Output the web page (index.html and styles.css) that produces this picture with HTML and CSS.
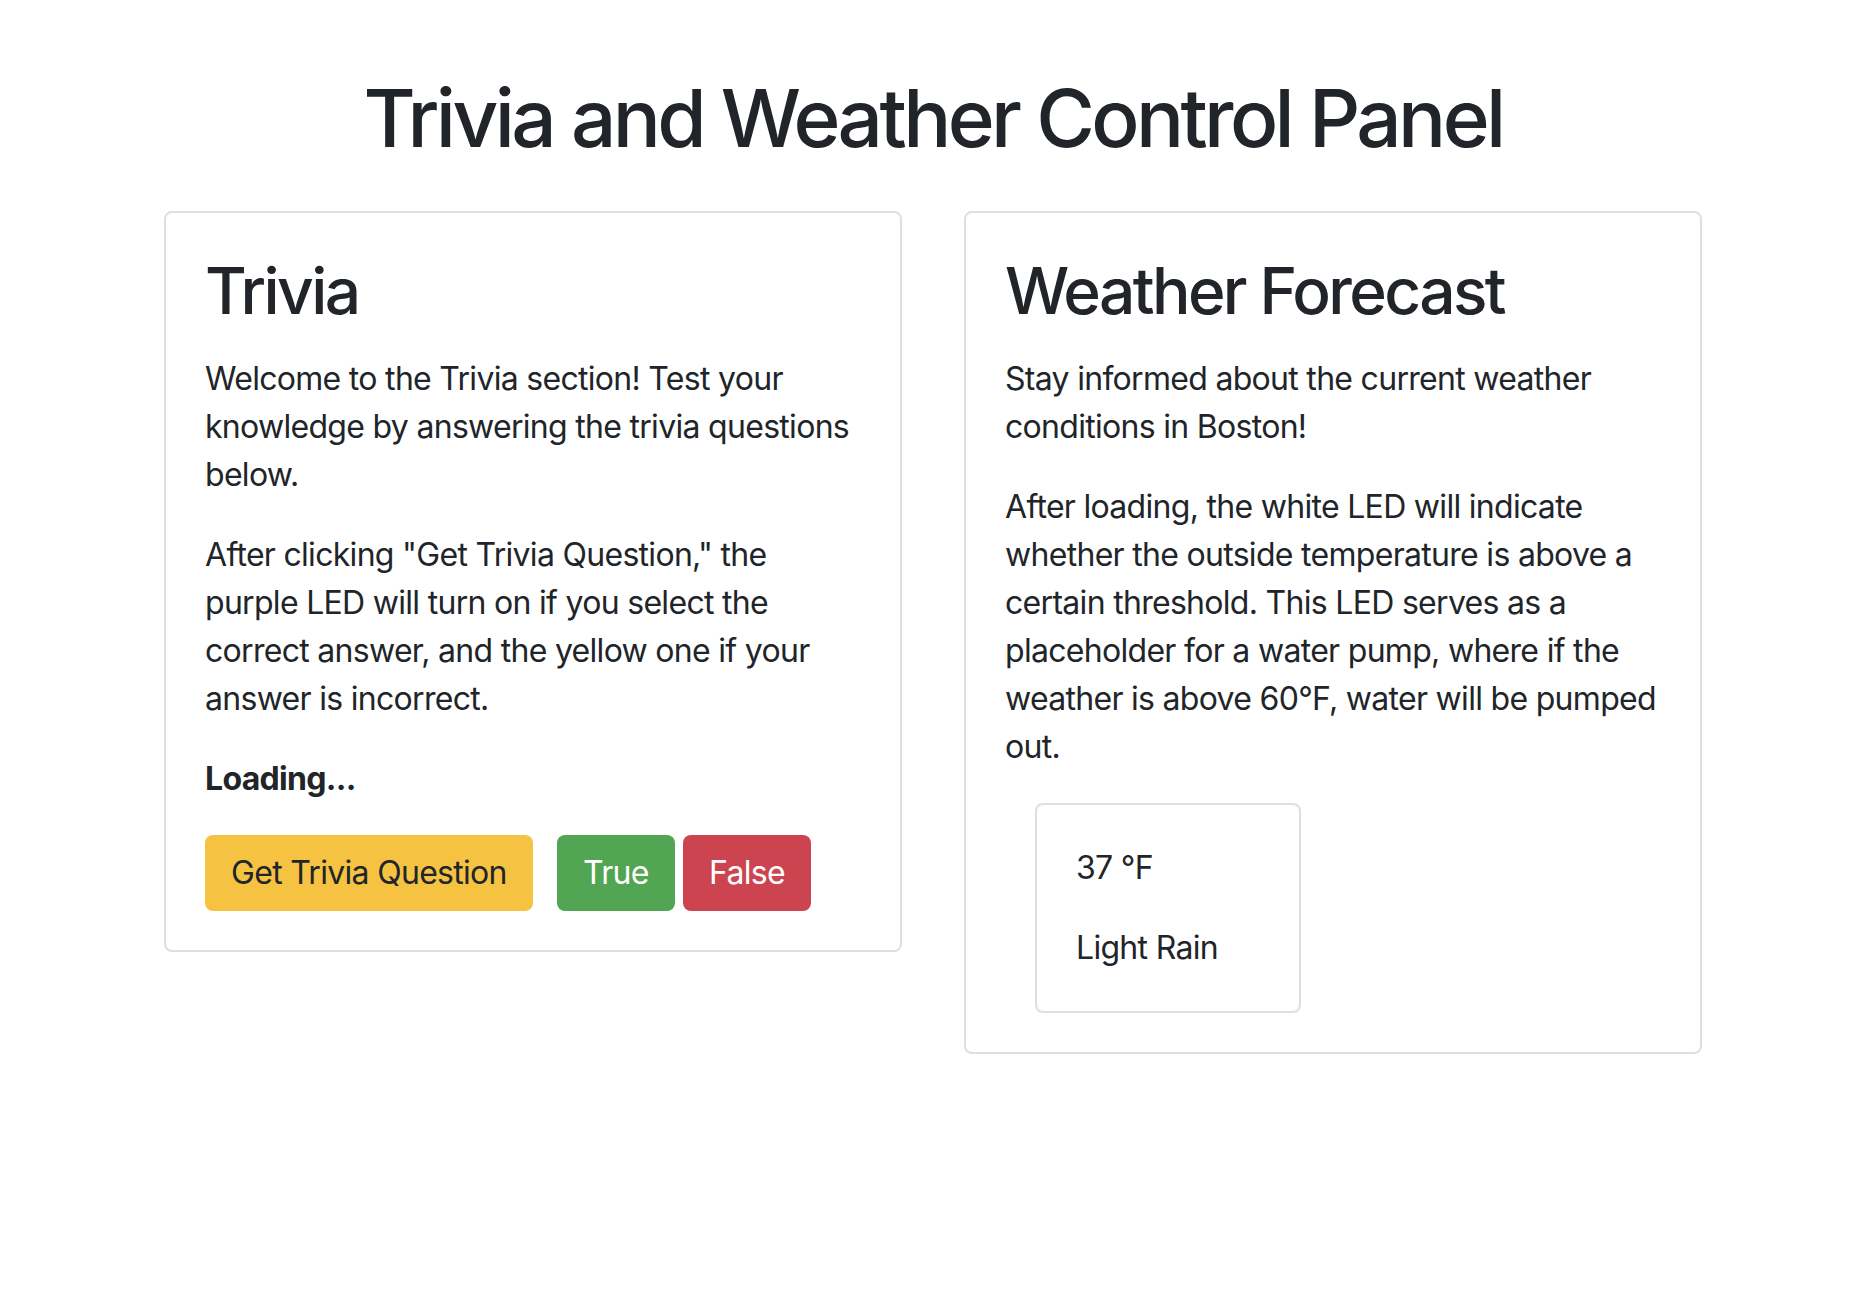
FILE: index.html
```html
<!DOCTYPE html>
<html lang="en">
<head>
<meta charset="utf-8">
<title>Trivia and Weather Control Panel</title>
<link rel="stylesheet" href="styles.css">
</head>
<body>
<div class="page">
  <h1 class="title">Trivia and Weather Control Panel</h1>
  <div class="columns">
    <section class="card">
      <div class="card-body">
        <h2 class="card-title">Trivia</h2>
        <p>Welcome to the Trivia section! Test your knowledge by answering the trivia questions below.</p>
        <p>After clicking "Get Trivia Question," the purple LED will turn on if you select the correct answer, and the yellow one if your answer is incorrect.</p>
        <p class="status">Loading...</p>
        <div class="buttons"><button class="btn btn-warning">Get Trivia Question</button> <button class="btn btn-success">True</button> <button class="btn btn-danger">False</button></div>
      </div>
    </section>
    <section class="card">
      <div class="card-body">
        <h2 class="card-title">Weather Forecast</h2>
        <p>Stay informed about the current weather conditions in Boston!</p>
        <p>After loading, the white LED will indicate whether the outside temperature is above a certain threshold. This LED serves as a placeholder for a water pump, where if the weather is above 60°F, water will be pumped out.</p>
        <div class="weather-wrap">
          <div class="card weather-card">
            <div class="card-body">
              <p>37 °F</p>
              <p class="last">Light Rain</p>
            </div>
          </div>
        </div>
      </div>
    </section>
  </div>
</div>
</body>
</html>
```
FILE: styles.css
```css
* { box-sizing: border-box; }
html, body { margin: 0; padding: 0; background: #fff; }
body {
  font-family: Inter, "Noto Sans", sans-serif;
  font-size: 32px;
  line-height: 48px;
  letter-spacing: -0.7px;
  color: #212529;
}
.page {
  width: 1538px;
  margin: 0 auto;
  position: relative;
  left: -3px;
  padding-top: 70px;
}
.title {
  margin: 0 0 45px;
  text-align: center;
  font-size: 80px;
  font-weight: 500;
  line-height: 96px;
  letter-spacing: -3.6px;
}
.columns {
  display: grid;
  grid-template-columns: 738px 738px;
  column-gap: 62px;
  align-items: start;
}
.card {
  border: 2px solid #dfdfdf;
  border-radius: 8px;
  background: #fff;
}
.card-body { padding: 39px; }
.card-title {
  margin: 0 0 26px;
  font-size: 64px;
  font-weight: 500;
  line-height: 77px;
  letter-spacing: -2.6px;
}
p { margin: 0 0 32px; }
.status { font-weight: 700; }
.btn {
  font-family: inherit;
  font-size: 32px;
  line-height: 48px;
  letter-spacing: -0.7px;
  padding: 12px 24px;
  border: 2px solid transparent;
  border-radius: 8px;
  cursor: pointer;
}
.btn-warning { background: #f5c242; color: #212529; margin-right: 16px; }
.btn-success { background: #52a552; color: #fff; }
.btn-danger { background: #cc444f; color: #fff; }
.weather-wrap { padding-left: 30px; }
.weather-card { width: 266px; }
.weather-card .card-body { padding: 39px; }
.weather-card .last { margin-bottom: 0; }
```
